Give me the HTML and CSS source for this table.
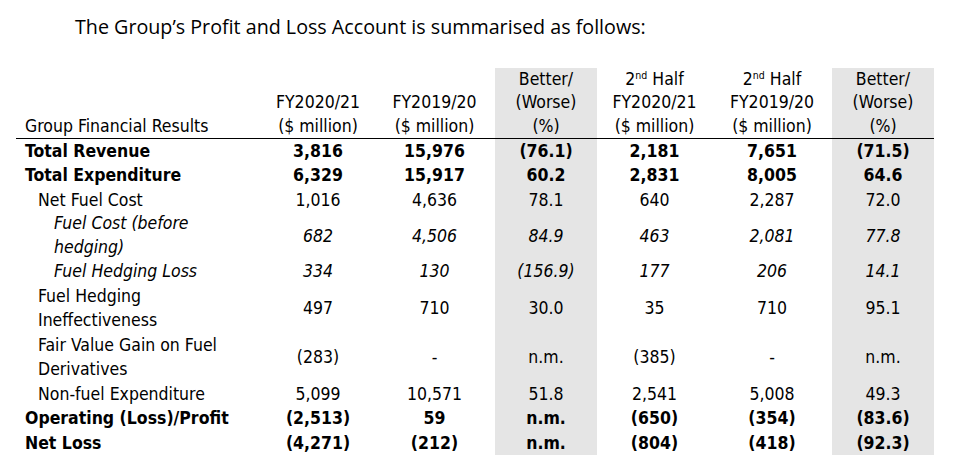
FILE: index.html
```html
<!DOCTYPE html>
<html>
<head>
<meta charset="utf-8">
<link rel="stylesheet" href="styles.css">
</head>
<body>
<div class="page">
  <p class="title">The Group’s Profit and Loss Account is summarised as follows:</p>
  <table class="fin">
    <colgroup>
      <col class="c-label">
      <col class="c1">
      <col class="c2">
      <col class="c3">
      <col class="c4">
      <col class="c5">
      <col class="c6">
    </colgroup>
    <thead>
      <tr>
        <th class="label">Group Financial Results</th>
        <th>FY2020/21<br>($ million)</th>
        <th>FY2019/20<br>($ million)</th>
        <th class="shade">Better/<br>(Worse)<br>(%)</th>
        <th>2<sup>nd</sup> Half<br>FY2020/21<br>($ million)</th>
        <th>2<sup>nd</sup> Half<br>FY2019/20<br>($ million)</th>
        <th class="shade">Better/<br>(Worse)<br>(%)</th>
      </tr>
    </thead>
    <tbody>
      <tr class="bold">
        <td class="label">Total Revenue</td><td>3,816</td><td>15,976</td><td class="shade">(76.1)</td><td>2,181</td><td>7,651</td><td class="shade">(71.5)</td>
      </tr>
      <tr class="bold">
        <td class="label">Total Expenditure</td><td>6,329</td><td>15,917</td><td class="shade">60.2</td><td>2,831</td><td>8,005</td><td class="shade">64.6</td>
      </tr>
      <tr>
        <td class="label ind1">Net Fuel Cost</td><td>1,016</td><td>4,636</td><td class="shade">78.1</td><td>640</td><td>2,287</td><td class="shade">72.0</td>
      </tr>
      <tr class="ital">
        <td class="label ind2">Fuel Cost (before<br>hedging)</td><td>682</td><td>4,506</td><td class="shade">84.9</td><td>463</td><td>2,081</td><td class="shade">77.8</td>
      </tr>
      <tr class="ital">
        <td class="label ind2">Fuel Hedging Loss</td><td>334</td><td>130</td><td class="shade">(156.9)</td><td>177</td><td>206</td><td class="shade">14.1</td>
      </tr>
      <tr>
        <td class="label ind1">Fuel Hedging<br>Ineffectiveness</td><td>497</td><td>710</td><td class="shade">30.0</td><td>35</td><td>710</td><td class="shade">95.1</td>
      </tr>
      <tr>
        <td class="label ind1">Fair Value Gain on Fuel<br>Derivatives</td><td>(283)</td><td>-</td><td class="shade">n.m.</td><td>(385)</td><td>-</td><td class="shade">n.m.</td>
      </tr>
      <tr>
        <td class="label ind1">Non-fuel Expenditure</td><td>5,099</td><td>10,571</td><td class="shade">51.8</td><td>2,541</td><td>5,008</td><td class="shade">49.3</td>
      </tr>
      <tr class="bold">
        <td class="label">Operating (Loss)/Profit</td><td>(2,513)</td><td>59</td><td class="shade">n.m.</td><td>(650)</td><td>(354)</td><td class="shade">(83.6)</td>
      </tr>
      <tr class="bold">
        <td class="label">Net Loss</td><td>(4,271)</td><td>(212)</td><td class="shade">n.m.</td><td>(804)</td><td>(418)</td><td class="shade">(92.3)</td>
      </tr>
    </tbody>
  </table>
</div>
</body>
</html>
```

FILE: styles.css
```css
html, body {
  margin: 0;
  padding: 0;
  background: #ffffff;
}

.page {
  padding: 12px 0 0 16px;
  color: #000000;
}

.title {
  margin: 0 0 26px 59px;
  font-family: "Open Sans", "Noto Sans", sans-serif;
  font-stretch: 90%;
  font-size: 19.7px;
  line-height: 30px;
}

.fin {
  border-collapse: collapse;
  border-spacing: 0;
  table-layout: fixed;
  width: 918px;
  font-family: "DejaVu Sans Condensed", "DejaVu Sans", sans-serif;
  font-stretch: condensed;
  font-size: 17.5px;
}

.c-label { width: 246px; }
.c1 { width: 112px; }
.c2 { width: 121px; }
.c3 { width: 102px; }
.c4 { width: 115px; }
.c5 { width: 120px; }
.c6 { width: 102px; }

.fin th {
  font-weight: normal;
  text-align: center;
  vertical-align: bottom;
  line-height: 23.3px;
  padding: 0;
  border-bottom: 1.5px solid #000000;
}

.fin th sup {
  font-size: 10.5px;
  line-height: 0;
  vertical-align: 6px;
}

.fin td {
  text-align: center;
  vertical-align: middle;
  line-height: 24.45px;
  padding: 0;
}

.fin .label {
  text-align: left;
  padding-left: 9px;
}

.fin .ind1 { padding-left: 22px; }
.fin .ind2 { padding-left: 38px; }

.fin .shade {
  background: #e5e5e5;
}

.bold td { font-weight: bold; }
.ital td { font-style: italic; }
.ital td.label { line-height: 23.6px; }
```
